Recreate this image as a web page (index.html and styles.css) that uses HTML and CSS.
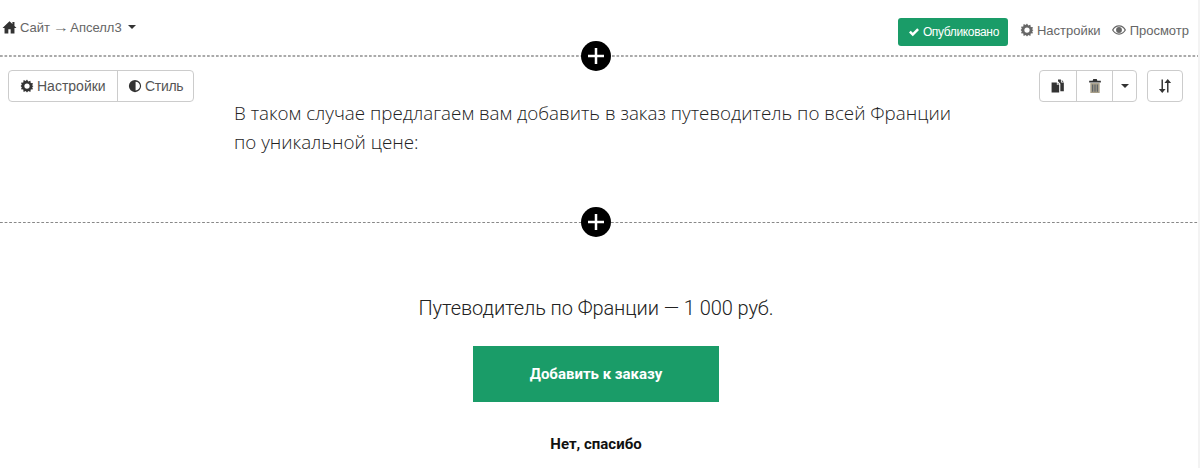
FILE: index.html
```html
<!DOCTYPE html>
<html lang="en">
<head>
    <meta charset="UTF-8">
    <title>Апселл3</title>
    <link rel="stylesheet" href="styles.css">
</head>
<body>
    <svg class="icon-defs" width="0" height="0">
        <symbol id="i-gear" viewBox="0 0 24 24"><path fill-rule="evenodd" d="M12 1l2.200 3.300 3.600-1.400.6 3.900 3.900.6-1.400 3.600L23 12l-2.100 2 1.400 3.600-3.900.6-.6 3.900-3.600-1.400L12 23l-2.200-2.300-3.600 1.400-.6-3.900-3.900-.6 1.400-3.600L1 12l2.100-2-1.400-3.600 3.900-.6.6-3.900 3.600 1.400zM12 7.500a4.500 4.500 0 1 0 0 9 4.500 4.500 0 0 0 0-9z"/></symbol>
    </svg>

    <header class="topbar">
        <div class="crumbs">
            <svg class="ico ico-home" viewBox="0 0 24 24"><path d="M12 2L0 13.500h3.500V23h6.500v-7h4v7h6.500v-9.500H24l-3.500-3.400V3.500h-3.500v3.200z"/></svg>
            <span>Сайт <span class="arrow">→</span> Апселл3</span>
            <i class="caret"></i>
        </div>
        <div class="actions">
            <span class="published">
                <svg class="ico ico-check" viewBox="0 0 24 24"><path d="M2 13l3.500-3.500 4 4L18.500 4.500 22 8 9.500 20.500z"/></svg>
                Опубликовано
            </span>
            <span class="link"><svg class="ico"><use href="#i-gear"/></svg>Настройки</span>
            <span class="link">
                <svg class="ico ico-eye" viewBox="0 0 24 24"><path fill-rule="evenodd" d="M12 4C6.500 4 2.500 7.500 0 12c2.500 4.500 6.500 8 12 8s9.500-3.500 12-8c-2.500-4.500-6.500-8-12-8zm0 2c4.500 0 7.500 2.500 9.600 6-2.100 3.500-5.100 6-9.600 6s-7.500-2.500-9.600-6C4.500 8.500 7.500 6 12 6zm0 1a5 5 0 1 0 0 10 5 5 0 0 0 0-10z"/></svg>Просмотр
            </span>
        </div>
        <button class="add-block"><svg viewBox="0 0 30 30"><path d="M15 7v16M7 15h16"/></svg></button>
    </header>

    <section class="block block-text">
        <div class="btn-group group-left">
            <span class="btn btn-settings"><svg class="ico ico-dark"><use href="#i-gear"/></svg>Настройки</span>
            <span class="btn btn-style"><svg class="ico ico-dark" viewBox="0 0 24 24"><path fill-rule="evenodd" d="M12 1.500a10.500 10.500 0 1 0 0 21 10.500 10.500 0 0 0 0-21zm1 3a7.500 7.500 0 0 1 0 15z"/></svg>Стиль</span>
        </div>
        <div class="tools-right">
            <div class="btn-group">
                <span class="btn btn-icon"><svg class="ico ico-dark" viewBox="0 0 24 24"><path d="M1 6h9v4h4v13H1zM11.500 6.500l2.500 2.500h-2.500zM12 1h5v5h5v15h-6V8l-4-4zM18.500 1.500l3 3h-3z"/></svg></span>
                <span class="btn btn-icon"><svg class="ico ico-trash" viewBox="0 0 24 24"><path fill="#333" d="M9 0h6l1 3h6v3H2V3h6z"/><path fill="#a89f8a" d="M4 7h16v17H4z"/><path fill="#5a6068" d="M7 9.500h2V22H7zM11 9.500h2V22h-2zM15 9.500h2V22h-2z"/></svg></span>
                <span class="btn btn-caret"><i class="caret caret-dark"></i></span>
            </div>
            <div class="btn-group">
                <span class="btn btn-icon btn-sort"><svg class="ico ico-dark" viewBox="0 0 24 24"><path d="M6 1h2.500v16H13l-5.700 7L1.500 17H6zM15.500 23V7H11l5.700-7 5.800 7H18v16z"/></svg></span>
            </div>
        </div>
        <p class="lead">В таком случае предлагаем вам добавить в заказ путеводитель по всей Франции по уникальной цене:</p>
        <button class="add-block"><svg viewBox="0 0 30 30"><path d="M15 7v16M7 15h16"/></svg></button>
    </section>

    <section class="block block-offer">
        <p class="offer">Путеводитель по Франции — 1 000 руб.</p>
        <a class="cta">Добавить к заказу</a>
        <a class="decline">Нет, спасибо</a>
    </section>
</body>
</html>
```

FILE: styles.css
```css
body {
    margin: 0;
    height: 468px;
    overflow: hidden;
    background: #fff;
    border-right: 2px solid #f3f3f3;
    font-family: 'Roboto', sans-serif;
    color: #333;
}

.icon-defs {
    position: absolute;
}

.ico {
    width: 14px;
    height: 14px;
    fill: #666;
    flex: none;
}

.ico-dark {
    fill: #333;
}

.topbar {
    position: relative;
    height: 57px;
    box-sizing: border-box;
    background: linear-gradient(to right, #aaa 55%, transparent 55%) left bottom / 4.5px 2px repeat-x;
    display: flex;
    justify-content: space-between;
    font-family: 'Liberation Sans', sans-serif;
    font-size: 13px;
    color: #666;
}

.crumbs {
    display: flex;
    align-items: center;
    gap: 3px;
    height: 16px;
    margin: 19px 0 0 2px;
}

.arrow {
    display: inline-block;
    transform: scaleX(1.25);
}

.ico-home {
    fill: #333;
    width: 15px;
    height: 14px;
}

.caret {
    width: 0;
    height: 0;
    margin-left: 3px;
    border-top: 4px solid #333;
    border-left: 4px solid transparent;
    border-right: 4px solid transparent;
}

.actions {
    display: flex;
    align-items: center;
    height: 28px;
    margin: 18px 9px 0 0;
}

.published {
    display: flex;
    align-items: center;
    gap: 3px;
    height: 28px;
    width: 110px;
    box-sizing: border-box;
    padding: 0 0 0 10px;
    margin-right: 12px;
    background: #1a9c68;
    border-radius: 3px;
    color: #fff;
    font-size: 12px;
    letter-spacing: -0.35px;
}

.ico-check {
    fill: #fff;
    width: 12px;
    height: 12px;
}

.link {
    display: flex;
    align-items: center;
    gap: 3px;
    margin-right: 11px;
    position: relative;
    top: -2px;
}

.link:last-child {
    gap: 4px;
    margin-right: 0;
}

.add-block {
    position: absolute;
    left: 581px;
    bottom: -14px;
    z-index: 2;
    width: 30px;
    height: 30px;
    padding: 0;
    border: 0;
    border-radius: 50%;
    background: #000;
}

.add-block svg {
    display: block;
    width: 30px;
    height: 30px;
    stroke: #fff;
    stroke-width: 2.500;
    fill: none;
}

.block {
    position: relative;
}

.block-text {
    height: 166px;
    background: linear-gradient(to right, #888 60%, transparent 60%) left bottom / 4.6px 1px repeat-x;
    box-sizing: border-box;
}

.btn-group {
    display: flex;
    height: 32px;
    box-sizing: border-box;
    border: 1px solid #ccc;
    border-radius: 4px;
    background: #fff;
    font-family: 'Liberation Sans', sans-serif;
    font-size: 14px;
    color: #555;
}

.group-left {
    position: absolute;
    left: 8px;
    top: 13px;
}

.tools-right {
    position: absolute;
    right: 15px;
    top: 13px;
    display: flex;
    gap: 10px;
}

.btn {
    display: flex;
    align-items: center;
    gap: 3px;
    border-left: 1px solid #ccc;
    box-sizing: border-box;
}

.btn:first-child {
    border-left: 0;
}

.btn-settings {
    width: 108px;
    padding-left: 11px;
}

.btn-style {
    width: 76px;
    padding-left: 10px;
    letter-spacing: -0.3px;
}

.btn-icon {
    width: 36px;
    justify-content: center;
}

.btn-sort {
    width: 34px;
}

.btn-caret {
    width: 24px;
    justify-content: center;
}

.caret-dark {
    margin-left: 0;
}

.lead {
    width: 724px;
    margin: 0 0 0 234px;
    padding-top: 42px;
    font-family: 'Open Sans', sans-serif;
    font-size: 18.8px;
    font-weight: 300;
    line-height: 29px;
    color: #222;
}

.block-offer {
    display: flex;
    flex-direction: column;
    align-items: center;
    padding-right: 6px;
}

.offer {
    margin: 73px 0 0;
    font-size: 20px;
    font-weight: 300;
    line-height: 24px;
    letter-spacing: -0.08px;
    color: #222;
}

.cta {
    width: 246px;
    height: 56px;
    margin-top: 26px;
    display: flex;
    align-items: center;
    justify-content: center;
    background: #1a9c68;
    color: #fff;
    font-size: 15px;
    font-weight: 700;
}

.decline {
    margin-top: 33px;
    font-size: 15px;
    font-weight: 700;
    line-height: 18px;
    color: #111;
}
```
